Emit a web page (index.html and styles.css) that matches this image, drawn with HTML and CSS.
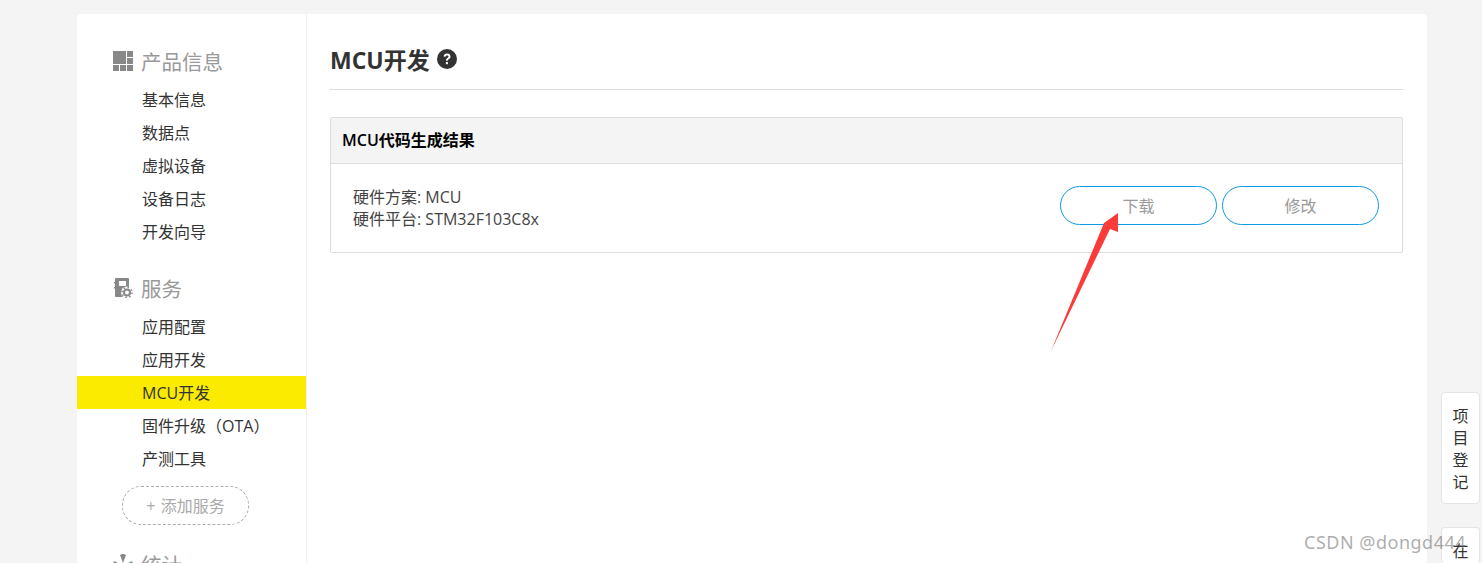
FILE: index.html
```html
<!DOCTYPE html>
<html lang="en">
<head>
    <meta charset="UTF-8">
    <title>MCU开发</title>
    <link rel="stylesheet" href="styles.css">
</head>
<body>
    <div class="wrap">
        <div class="sidebar">
            <div class="nav-title">
                <svg class="nav-icon" viewBox="0 0 20 20">
                    <rect x="0" y="0" width="13" height="13"/>
                    <rect x="14" y="0" width="6" height="6"/>
                    <rect x="14" y="7" width="6" height="6"/>
                    <rect x="0" y="14" width="6" height="6"/>
                    <rect x="7" y="14" width="6" height="6"/>
                    <rect x="14" y="14" width="6" height="6"/>
                </svg>
                产品信息
            </div>
            <a class="nav-item">基本信息</a>
            <a class="nav-item">数据点</a>
            <a class="nav-item">虚拟设备</a>
            <a class="nav-item">设备日志</a>
            <a class="nav-item">开发向导</a>

            <div class="nav-title second">
                <svg class="nav-icon" viewBox="0 0 20 20">
                    <path d="M3 0h12a1 1 0 0 1 1 1v18H3a1 1 0 0 1-1-1V1a1 1 0 0 1 1-1zM6 3v5h7V3z"/>
                    <rect x="1" y="4" width="2" height="1.500"/>
                    <rect x="1" y="9" width="2" height="1.500"/>
                    <circle cx="14" cy="14.500" r="6" fill="#fff"/>
                    <circle cx="14" cy="14.500" r="3" fill="none" stroke="#888" stroke-width="2"/>
                    <circle cx="14" cy="14.500" r="5" fill="none" stroke="#888" stroke-width="1.500" stroke-dasharray="1.600 2.300"/>
                </svg>
                服务
            </div>
            <a class="nav-item">应用配置</a>
            <a class="nav-item">应用开发</a>
            <a class="nav-item active">MCU开发</a>
            <a class="nav-item">固件升级（OTA）</a>
            <a class="nav-item">产测工具</a>
            <div class="add-service"><span class="plus">+</span> 添加服务</div>

            <div class="nav-title third">
                <svg class="nav-icon" viewBox="0 0 20 20">
                    <path d="M10 9 7 1Q10-1 13 1zM8.500 11 1 7Q-1 12 2 16zM11.500 11 19 7Q21 12 18 16z"/>
                    <circle cx="10" cy="11" r="1.500"/>
                </svg>
                统计
            </div>
        </div>

        <div class="main">
            <h1 class="page-title">MCU开发
                <svg class="help" viewBox="0 0 20 20">
                    <circle cx="10" cy="10" r="10" fill="#333"/>
                    <path d="M6.600 7.600C6.800 5.600 8.200 4.600 10.100 4.600c2 0 3.400 1.200 3.400 2.900 0 1.500-.9 2.100-1.800 2.700-.7.5-1 .8-1 1.600H9c0-1.500.5-2.100 1.400-2.700.7-.5 1.100-.8 1.100-1.500 0-.7-.6-1.200-1.400-1.200-.9 0-1.400.5-1.500 1.300z" fill="#fff"/>
                    <rect x="8.900" y="13" width="2" height="2.200" fill="#fff"/>
                </svg>
            </h1>

            <div class="panel">
                <div class="panel-head">MCU代码生成结果</div>
                <div class="panel-body">
                    <div class="hw-info">
                        <div>硬件方案: MCU</div>
                        <div>硬件平台: STM32F103C8x</div>
                    </div>
                    <div class="btns">
                        <button class="round-btn">下载</button>
                        <button class="round-btn">修改</button>
                    </div>
                </div>
            </div>
        </div>
    </div>

    <div class="side-tab first-tab">项<br>目<br>登<br>记</div>
    <div class="side-tab second-tab">在</div>

    <!-- arrow drawn over the screenshot -->
    <svg class="arrow" width="80" height="150" viewBox="0 0 80 150">
        <path d="M1 140 L54 12 L68 2 L68 21 L60 18 Z" fill="#fb3a3a"/>
    </svg>

    <div class="watermark">CSDN @dongd444</div>
</body>
</html>
```
FILE: styles.css
```css
html, body {
    height: 563px;
    overflow: hidden;
}

body {
    margin: 0;
    padding: 14px 55px 0 77px;
    background-color: #f4f4f4;
    color: #333;
    font-family: "Open Sans", "Noto Sans CJK SC", sans-serif;
    font-size: 16px;
}

.wrap {
    display: flex;
    height: 600px;
    background-color: #fff;
    border-radius: 4px;
}

.sidebar {
    width: 229px;
    flex-shrink: 0;
    padding-top: 30px;
    border-right: 1px solid #f0f0f0;
}

.nav-title {
    display: flex;
    align-items: center;
    height: 33px;
    margin-bottom: 6px;
    padding-left: 36px;
    color: #999;
    font-size: 20.5px;
}

.nav-title.second {
    margin-top: 23px;
}

.nav-title.third {
    margin-top: 22px;
}

.nav-icon {
    width: 20px;
    height: 20px;
    margin-right: 8px;
    fill: #888;
}

.nav-item {
    display: block;
    height: 33px;
    line-height: 35px;
    padding-left: 65px;
    color: #333;
    font-size: 16px;
}

.nav-item.active {
    background-color: #faeb00;
}

.add-service {
    width: 125px;
    height: 37px;
    line-height: 39px;
    margin: 11px 0 0 45px;
    border: 1px dashed #aaa;
    border-radius: 19px;
    color: #aaa;
    font-size: 16px;
    text-align: center;
}

.plus {
    margin-right: 1px;
}

.main {
    flex: 1;
    padding: 0 24px 0 23px;
}

.page-title {
    display: flex;
    align-items: center;
    gap: 7px;
    height: 61px;
    margin: 0 0 27px;
    padding-top: 14px;
    border-bottom: 1px solid #ddd;
    color: #333;
    font-size: 23px;
    font-weight: 700;
}

.help {
    width: 20px;
    height: 20px;
    margin-top: 1px;
}

.panel {
    border: 1px solid #ddd;
    border-radius: 2px;
}

.panel-head {
    height: 45px;
    line-height: 45px;
    padding-left: 11px;
    background-color: #f4f4f4;
    border-bottom: 1px solid #ddd;
    color: #000;
    font-weight: 600;
}

.panel-body {
    display: flex;
    justify-content: space-between;
    align-items: center;
    height: 88px;
    padding: 0 23px 0 22px;
}

.hw-info {
    line-height: 22px;
    margin-top: -1px;
    color: #444;
}

.btns {
    display: flex;
    gap: 5px;
    margin-top: -5px;
}

.round-btn {
    width: 157px;
    height: 39px;
    padding: 0 0 2px;
    background-color: #fff;
    border: 1px solid #0e9be2;
    border-radius: 20px;
    color: #999;
    font-family: inherit;
    font-size: 16px;
}

.side-tab {
    position: absolute;
    left: 1441px;
    width: 39px;
    box-sizing: border-box;
    background-color: #fff;
    border: 1px solid #e4e4e4;
    border-radius: 4px;
    color: #333;
    font-size: 16px;
    line-height: 22px;
    text-align: center;
}

.first-tab {
    top: 392px;
    height: 112px;
    padding-top: 12px;
}

.second-tab {
    top: 527px;
    height: 36px;
    padding-top: 12px;
    border-bottom: 0;
}

.arrow {
    position: absolute;
    left: 1050px;
    top: 211px;
}

.watermark {
    position: absolute;
    left: 1304px;
    top: 530px;
    color: rgba(90, 90, 90, 0.5);
    font-family: "Noto Sans", sans-serif;
    font-size: 18px;
    letter-spacing: 0.5px;
}
```
